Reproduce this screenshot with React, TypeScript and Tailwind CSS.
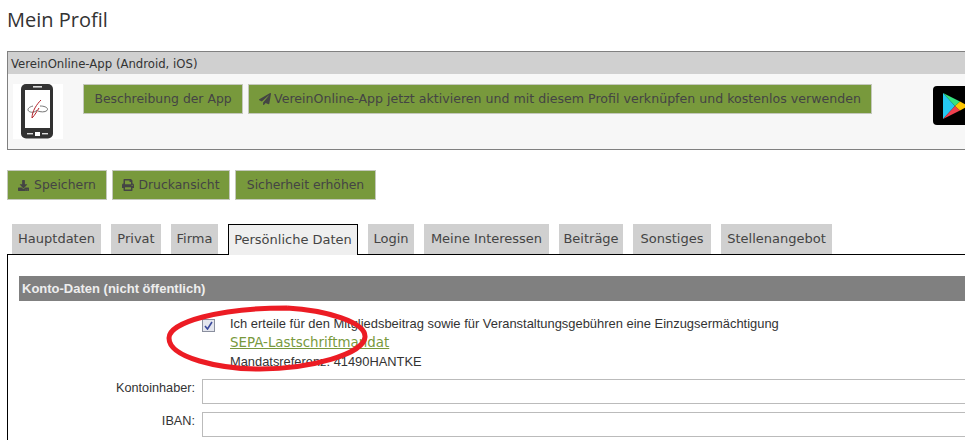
import { FaDownload, FaPrint, FaPaperPlane } from "react-icons/fa";

const V = "font-['DejaVu_Sans',Verdana,sans-serif]";

function Btn({ children, className = "" }: { children: React.ReactNode; className?: string }) {
  return (
    <div className={`h-[30px] flex items-center justify-center whitespace-nowrap border border-[#c4c8bc] bg-[#78993c] text-[#444] text-[12.4px] ${V} ${className}`}>
      {children}
    </div>
  );
}

function Tab({ label, w, active }: { label: string; w: string; active?: boolean }) {
  return (
    <div
      className={`${w} flex items-center justify-center text-[13px] text-[#444] ${V} ${
        active
          ? "h-[31px] -mb-px relative z-10 bg-[#efefef] border border-b-0 border-black text-[#222]"
          : "h-[30px] bg-[#d0d0d0]"
      }`}
    >
      {label}
    </div>
  );
}

function Field({ label, className = "" }: { label: string; className?: string }) {
  return (
    <div className={`flex ${className}`}>
      <div className="w-[176px] text-right text-[12.7px] leading-[18px] text-[#333]">{label}</div>
      <div className="ml-[7px] flex-1 h-[25px] border border-[#bbb] bg-white" />
    </div>
  );
}

export default function App() {
  return (
    <div className="relative w-[965px] h-[440px] overflow-hidden bg-white font-['Liberation_Sans',Arial,sans-serif]">
      <div className="w-[1200px] pl-[7px]">
        <h1 className="pt-[7px] h-[51px] text-[20px] leading-[26px] text-[#333] font-['Open_Sans',sans-serif]">Mein Profil</h1>

        <div className="h-[99px] border border-[#808080] bg-[#f7f7f7]">
          <div className={`h-[22px] bg-[#d0d0d0] pl-[3px] pt-px text-[11.7px] leading-[22px] text-[#333] ${V}`}>VereinOnline-App (Android, iOS)</div>
          <div className="flex pl-[5px] pt-[10px]">
            <div className="w-[50px] h-[55px] bg-white">
              <svg width="50" height="55" viewBox="0 0 50 55">
                <rect x="8" y="0" width="32" height="54.5" rx="5" fill="#333" />
                <rect x="12" y="6" width="25" height="38" fill="#fff" />
                <rect x="20" y="2" width="9" height="1.6" fill="#ddd" />
                <rect x="22" y="48" width="5" height="4" fill="#fff" />
                <rect x="14" y="49" width="6" height="1.4" fill="#ddd" />
                <rect x="29" y="49" width="6" height="1.4" fill="#ddd" />
                <path d="M20 22 C16 23 14 25 15.5 27 C18 29 22 28.5 24 26 M27 22 C32 22 36 24 34 26.5 C32 28.5 27 28 25 27" fill="none" stroke="#666" strokeWidth="0.9" />
                <path d="M28 16 C24 20 19 27 19 34 C22 31 24 27 26 24" fill="none" stroke="#b3222a" strokeWidth="1" />
              </svg>
            </div>
            <Btn className="ml-[20px] w-[160px]">Beschreibung der App</Btn>
            <Btn className="ml-[5px] w-[624px] gap-[3px]">
              <FaPaperPlane size={12} color="#444" />
              <span className="text-[12.6px]">VereinOnline-App jetzt aktivieren und mit diesem Profil verknüpfen und kostenlos verwenden</span>
            </Btn>
            <div className="ml-[61px] mt-[2px] w-[60px] h-[39px] rounded-[4px] bg-black flex items-center pl-[10px]">
              <svg width="26" height="26" viewBox="0 0 26 26">
                <path d="M0 0 L0 26 L12 13z" fill="#25c8f3" />
                <path d="M0 0 L12 13 L17 8.5z" fill="#35e27f" />
                <path d="M0 26 L12 13 L17 17.5z" fill="#f0404f" />
                <path d="M17 8.5 L12 13 L17 17.5 L25 13z" fill="#fdc500" />
              </svg>
            </div>
          </div>
        </div>

        <div className="flex gap-[5px] mt-[20px]">
          <Btn className="w-[100px] gap-[5px]"><FaDownload size={11} color="#444" />Speichern</Btn>
          <Btn className="w-[118px] gap-[4px]"><FaPrint size={12} color="#444" />Druckansicht</Btn>
          <Btn className="w-[141px]">Sicherheit erhöhen</Btn>
        </div>

        <div className="flex items-end gap-[10px] mt-[24px] pl-[5px]">
          <Tab label="Hauptdaten" w="w-[89px]" />
          <Tab label="Privat" w="w-[50px]" />
          <Tab label="Firma" w="w-[47px]" />
          <Tab label="Persönliche Daten" w="w-[130px]" active />
          <Tab label="Login" w="w-[46px]" />
          <Tab label="Meine Interessen" w="w-[125px]" />
          <Tab label="Beiträge" w="w-[64px]" />
          <Tab label="Sonstiges" w="w-[78px]" />
          <Tab label="Stellenangebot" w="w-[111px]" />
        </div>

        <div className="border-l border-t border-black pl-[11px] pt-[21px] h-[186px]">
          <div className="h-[25px] bg-[#808080] pl-[3px] text-[13px] leading-[25px] font-bold text-[#eee]">Konto-Daten (nicht öffentlich)</div>
          <div className="flex mt-[18px] ml-[183px]">
            <div className="w-[13px] h-[13px] border border-[#8a8f9e] bg-[#e4e6ee] flex items-center justify-center">
              <svg width="9" height="9" viewBox="0 0 9 9"><path d="M1 5 L3.5 8 L8 1" fill="none" stroke="#3b4a9c" strokeWidth="1.6" /></svg>
            </div>
            <div className="ml-[15px] -mt-[5px] h-[56px] text-[12.93px] leading-[19px] text-[#333]">
              <div>Ich erteile für den Mitgliedsbeitrag sowie für Veranstaltungsgebühren eine Einzugsermächtigung</div>
              <div className={`${V} text-[13.4px] text-[#78993c] underline`}>SEPA-Lastschriftmandat</div>
              <div className="text-[12.87px]">Mandatsreferenz: 41490HANTKE</div>
            </div>
          </div>
          <Field label="Kontoinhaber:" className="mt-[9px]" />
          <Field label="IBAN:" className="mt-[8px]" />
        </div>
      </div>

      <svg className="absolute left-[160px] top-[300px] pointer-events-none" width="215" height="80" viewBox="0 0 215 80">
        <path d="M127 8 C165 10 206 22 205 37 C204 54 150 69 100 69 C60 69 9 58 9 38 C9 22 60 8 127 8" fill="none" stroke="#ec1c24" strokeWidth="5" />
      </svg>
    </div>
  );
}
